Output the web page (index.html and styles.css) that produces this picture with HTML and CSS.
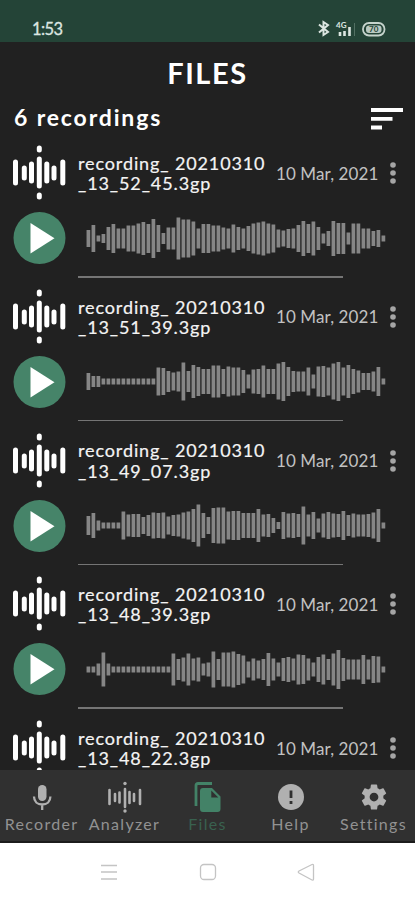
FILE: index.html
```html
<!DOCTYPE html>
<html lang="en">
<head>
<meta charset="utf-8">
<title>Files</title>
<link rel="stylesheet" href="styles.css">
</head>
<body>
<svg class="defs" aria-hidden="true">
  <symbol id="wave" viewBox="0 0 56 56">
    <path d="M3.500 17v21M12.300 23v10M19.500 19v17M27.300 14v27M34.800 19v17M42 23v10M50.800 17v21M27.300 3v2M27.300 50v2" fill="none" stroke="currentColor" stroke-width="5" stroke-linecap="round"/>
  </symbol>
</svg>
<div class="phone">
  <header class="status">
    <span class="clock">1:53</span>
    <svg class="status-icons" width="70" height="18" viewBox="0 0 70 18">
      <path d="M2 4.500l9 7.500-4.500 3V2l4.500 3-9 7.500" fill="none" stroke="#dce6e1" stroke-width="2"/>
      <text x="19" y="8" class="tiny">4G</text>
      <path d="M23 12v4M27.500 11v5M32.500 7v9" stroke="#dce6e1" stroke-width="2.600"/>
      <path d="M37.500 3v13" stroke="#527063" stroke-width="1"/>
      <rect x="46" y="3" width="21.500" height="12.500" rx="6" fill="none" stroke="#c5d3cc" stroke-width="1.800"/>
      <rect x="49" y="5.500" width="15.500" height="7.500" rx="3" fill="#b9c9c1"/>
      <text x="52" y="12" class="battery">70</text>
    </svg>
  </header>
  <main class="content">
    <h1>FILES</h1>
    <div class="summary">
      <span class="count">6 recordings</span>
      <svg width="32" height="23" viewBox="0 0 32 23"><path d="M0 2h32M0 10.800h21.500M0 19.500h11" stroke="#fff" stroke-width="3.800"/></svg>
    </div>
    <div class="list" id="list"></div>
  </main>
  <nav class="tabs">
    <div class="tab"><svg width="24" height="30" viewBox="0 0 24 30"><rect x="8" y="3" width="8.500" height="16" rx="4.200" fill="currentColor"/><path d="M4 14.500c0 5 3.500 8 8.200 8s8.200-3 8.200-8M12.200 22v6" fill="none" stroke="currentColor" stroke-width="2.300"/></svg><span>Recorder</span></div>
    <div class="tab"><svg width="36" height="34" viewBox="0 0 36 34"><path d="M2.500 10v14M8 14v7M12.500 12.500v10M18 9v18M22.500 12v11M27 14v7M33 10v14" stroke="currentColor" stroke-width="2.600" fill="none" stroke-linecap="round"/><circle cx="18" cy="3.500" r="1.700" fill="currentColor"/><circle cx="18" cy="31" r="1.700" fill="currentColor"/></svg><span>Analyzer</span></div>
    <div class="tab active"><svg width="28" height="30" viewBox="0 0 28 30"><path d="M2 24V3.500Q2 1.500 4 1.500H18" fill="none" stroke="currentColor" stroke-width="2.800"/><path fill-rule="evenodd" d="M9 6h9l8.500 8.500V27q0 3-3 3H9q-3 0-3-3V9q0-3 3-3zM17.300 8.500V15.500H24.300z" fill="currentColor"/></svg><span>Files</span></div>
    <div class="tab"><svg width="28" height="28" viewBox="0 0 28 28"><circle cx="14" cy="14" r="13" fill="currentColor"/><path d="M14 7.500v7.500M14 18v3" stroke="#303030" stroke-width="2.800"/></svg><span>Help</span></div>
    <div class="tab"><svg width="30" height="30" viewBox="0 0 24 24"><path fill="currentColor" d="M19.430 12.980c.04-.32.07-.64.07-.98s-.03-.66-.07-.98l2.110-1.650c.19-.15.24-.42.12-.64l-2-3.460c-.12-.22-.39-.3-.61-.22l-2.490 1c-.52-.4-1.080-.73-1.690-.98l-.38-2.650C14.460 2.180 14.250 2 14 2h-4c-.25 0-.46.18-.49.42l-.38 2.650c-.61.25-1.170.59-1.690.98l-2.490-1c-.23-.09-.49 0-.61.22l-2 3.460c-.13.22-.07.49.12.64l2.110 1.650c-.04.32-.07.65-.07.98s.03.66.07.98l-2.110 1.650c-.19.15-.24.42-.12.64l2 3.460c.12.22.39.3.61.22l2.490-1c.52.4 1.080.73 1.690.98l.38 2.650c.03.24.24.42.49.42h4c.25 0 .46-.18.49-.42l.38-2.650c.61-.25 1.170-.59 1.690-.98l2.490 1c.23.09.49 0 .61-.22l2-3.460c.12-.22.07-.49-.12-.64l-2.110-1.650zM12 15.500c-1.930 0-3.500-1.570-3.500-3.500s1.570-3.500 3.500-3.500 3.500 1.570 3.500 3.500-1.570 3.500-3.500 3.500z"/></svg><span>Settings</span></div>
  </nav>
  <footer class="system">
    <svg width="415" height="57" viewBox="0 0 415 57" fill="none" stroke="#c4c4c4" stroke-width="1.300">
      <path d="M101 22.500h16M101 29h16M101 36h16"/>
      <rect x="200.500" y="21.500" width="15" height="15" rx="3.500"/>
      <path d="M312 21.500q1.500-.5 1.500 1v13.500q0 1.500-1.500 1l-13-7q-1.500-1 0-2z"/>
    </svg>
  </footer>
</div>
<script src="app.js"></script>
</body>
</html>
```
FILE: styles.css
```css
* { box-sizing: border-box; }
body { margin: 0; background: #212121; font-family: Lato, "Open Sans", sans-serif; }
.defs { position: absolute; width: 0; height: 0; }
.phone { width: 415px; height: 900px; display: flex; flex-direction: column; overflow: hidden; background: #212121; color: #f5f5f5; }
.status { height: 42px; flex: none; background: #244437; display: flex; justify-content: space-between; padding: 20px 28px 0 32px; color: #dce6e1; }
.clock { font-size: 16.500px; line-height: 18px; letter-spacing: -0.6px; -webkit-text-stroke: 0.3px; }
.tiny { font-size: 8px; font-weight: 700; fill: #dce6e1; }
.battery { font-size: 8px; font-weight: 700; fill: #244437; }
.content { height: 728px; flex: none; overflow: hidden; }
h1 { margin: 0; padding-top: 14px; height: 58px; font-size: 29px; line-height: 34px; font-weight: 700; letter-spacing: 1.6px; text-align: center; color: #fff; }
.summary { height: 45px; display: flex; justify-content: space-between; padding: 8px 12px 0 14px; }
.count { font-size: 23px; font-weight: 700; line-height: 18px; letter-spacing: 1.85px; color: #fff; }
.item { height: 143.800px; }
.head { height: 56px; display: grid; grid-template-columns: 66px 198px 106px 1fr; align-items: center; padding-left: 12px; white-space: nowrap; }
.head .mark { color: #fff; width: 56px; height: 56px; }
.name { font-size: 18px; line-height: 20.300px; color: #f4f4f4; -webkit-text-stroke: 0.2px; }
.name span { display: block; }
.name .first { letter-spacing: 0.88px; }
.name .second { letter-spacing: 0.9px; }
.date { font-size: 17px; letter-spacing: 0.1px; color: #c2c2c2; }
.more { margin-left: 7px; }
.player { height: 75px; display: flex; align-items: center; padding-left: 13px; }
.bars { margin-left: 20px; }
.divider { width: 265px; height: 1.600px; margin-left: 78px; background: #757575; }
.tabs { height: 73px; flex: none; background: #303030; border-bottom: 2px solid #1c1c1c; display: grid; grid-template-columns: repeat(5, 83px); color: #b0b0b0; }
.tab { display: flex; flex-direction: column; align-items: center; }
.tab svg { height: 34px; margin-top: 10px; flex: none; }
.tab span { font-size: 16px; line-height: 20px; color: #929292; letter-spacing: 1.3px; white-space: nowrap; }
.tab.active { color: #438267; }
.tab.active span { color: #39614f; }
.system { height: 57px; flex: none; background: #fff; }
```
FILE: app.js
```js
const recordings = [
  ["_13_52_45.3gp", "17 27 6 9 23 29 20 20 26 26 30 33 29 39 27 11 22 22 42 38 38 34 20 29 29 26 26 22 20 28 23 20 25 30 32 34 30 28 18 16 19 20 27 35 29 34 23 10 15 35 31 31 12 30 30 20 20 15 17 6"],
  ["_13_51_39.3gp", "17 11 11 6 6 6 6 6 6 6 6 6 6 6 28 27 21 18 20 38 21 33 29 25 25 32 32 25 30 28 28 23 14 24 25 32 25 25 36 39 29 21 20 20 28 14 30 31 28 36 39 28 33 25 22 17 17 20 29 6"],
  ["_13_49_07.3gp", "19 25 10 6 6 6 6 28 22 23 23 17 21 26 25 26 18 21 22 26 28 33 42 25 17 35 36 36 28 29 29 25 25 25 33 22 23 15 7 27 24 25 23 38 22 27 14 24 27 24 23 29 21 24 22 22 23 26 33 6"],
  ["_13_48_39.3gp", "6 6 12 34 12 6 6 6 6 6 6 6 6 6 6 6 6 32 21 24 32 22 24 12 14 36 21 34 34 36 31 28 16 22 18 21 33 22 14 23 25 22 30 29 22 14 25 30 21 32 39 23 20 20 20 29 20 27 26 6"],
  ["_13_48_22.3gp", ""]
];

const barPath = levels => levels.split(" ").filter(Boolean)
  .map((h, i) => `M${2.4 + i * 5} ${21.5 - h / 2}v${h}`).join("");

document.getElementById("list").innerHTML = recordings.map(([name, levels]) => `
  <section class="item">
    <div class="head">
      <svg class="mark"><use href="#wave"/></svg>
      <div class="name"><span class="first">recording_ 20210310</span><span class="second">${name}</span></div>
      <span class="date">10 Mar, 2021</span>
      <svg class="more" width="8" height="24" viewBox="0 0 8 24" fill="#a5a5a5"><circle cx="4" cy="4" r="2.800"/><circle cx="4" cy="12" r="2.800"/><circle cx="4" cy="20" r="2.800"/></svg>
    </div>
    <div class="player">
      <svg width="53" height="53" viewBox="0 0 53 53"><circle cx="26.500" cy="26" r="26" fill="#468469"/><path d="M17.500 11v30.500l24-15.200z" fill="#fff"/></svg>
      <svg class="bars" width="300" height="44" viewBox="0 0 300 44"><path d="${barPath(levels)}" stroke="#868686" stroke-width="3.700"/></svg>
    </div>
    <div class="divider"></div>
  </section>`).join("");
```
